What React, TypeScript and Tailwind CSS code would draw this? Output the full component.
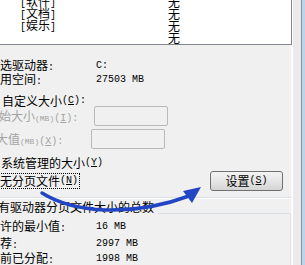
const cjk = "font-['Noto_Sans_CJK_SC','Noto_Sans_CJK_JP',sans-serif]";
const mono = "font-['Liberation_Mono',monospace]";

const drives = [
  ["软件", "无"],
  ["文档", "无"],
  ["娱乐", "无"],
  ["", "无"],
];

function Key({ k }: { k: string }) {
  return (
    <span className={`${mono} text-[10px]`}>
      (<span className="underline underline-offset-1">{k}</span>)
    </span>
  );
}

function Info({ label, value, className }: { label: string; value: string; className: string }) {
  return (
    <div className={`flex h-[12px] items-center leading-[12px] ${className}`}>
      <span className="w-[96px] shrink-0 whitespace-nowrap">
        {label}
        <span className={`${mono} text-[10px]`}>:</span>
      </span>
      <span className={`${mono} text-[10px]`}>{value}</span>
    </div>
  );
}

function SizeRow({ label, k, className, shift }: { label: string; k: string; className: string; shift: string }) {
  return (
    <div className={`flex h-[20px] items-center ${className}`}>
      <span className={`w-[95px] shrink-0 whitespace-nowrap text-[#a3a3a3] ${shift}`}>
        {label}
        <span className={`${mono} text-[8px]`}>(MB)</span>
        <Key k={k} />
        <span className={`${mono} text-[10px]`}>:</span>
      </span>
      <div className="h-[20px] w-[74px] rounded-[2px] border border-[#b9b9b9] bg-[#f0f0f0]" />
    </div>
  );
}

export default function App() {
  return (
    <div className={`relative flex h-[265px] w-[305px] overflow-hidden bg-[#f0f0f0] text-[12px] text-black ${cjk}`}>
      <div className="flex w-[291px] shrink-0 flex-col">
        {/* drive list */}
        <div className="h-[45px] shrink-0 overflow-hidden border-b border-[#828790] bg-white">
          <div className="-mt-[4px] flex flex-col">
            {drives.map(([name, size], i) => (
              <div key={i} className="flex h-[12px] items-center leading-[12px]">
                <span className="w-[168px] shrink-0 pl-[20px] whitespace-nowrap">
                  {name && (
                    <>
                      <span className={`${mono} text-[10px]`}>[</span>
                      {name}
                      <span className={`${mono} text-[10px]`}>]</span>
                    </>
                  )}
                </span>
                <span>{size}</span>
              </div>
            ))}
          </div>
        </div>

        <Info label="选驱动器" value="C:" className="mt-[15px]" />
        <Info label="用空间" value="27503 MB" className="mt-[2px]" />

        <div className="mt-[9px] flex h-[12px] items-center pl-[2px] leading-[12px] whitespace-nowrap">
          自定义大小
          <Key k="C" />
          <span className={`${mono} text-[10px]`}>:</span>
        </div>

        <SizeRow label="始大小" k="I" className="-mt-[1px]" shift="-ml-[1px]" />
        <SizeRow label="大值" k="X" className="mt-[3px]" shift="-ml-[4px]" />

        <div className="mt-[8px] flex h-[12px] items-center pl-[1px] leading-[12px] whitespace-nowrap">
          系统管理的大小
          <Key k="Y" />
        </div>

        <div className="mt-[2px] flex h-[20px] items-center">
          <span className="-ml-[1px] flex h-[16px] items-center border border-dotted border-black pr-[1px] leading-[12px] whitespace-nowrap">
            无分页文件
            <Key k="N" />
          </span>
          <button className="mr-[8px] ml-auto flex h-[20px] w-[73px] items-center justify-center rounded-[3px] border border-[#707070] bg-gradient-to-b from-[#f3f3f3] via-[#e6e6e6] to-[#d4d4d4] leading-[12px]">
            设置
            <Key k="S" />
          </button>
        </div>

        <div className="mt-[6px] h-px bg-[#d9dfe3]" />
        <div className="h-px bg-white" />

        <div className="mt-[2px] flex h-[13px] items-center leading-[12px]">
          <span className="-ml-[2px] whitespace-nowrap">有驱动器分页文件大小的总数</span>
          <div className="ml-[4px] mt-[13px] h-[7px] flex-1 self-start border-t border-r border-[#d9dfe3]" />
        </div>
        <div className="flex flex-1 flex-col border-r border-[#d9dfe3]">
          <Info label="许的最小值" value="16 MB" className="mt-[8px]" />
          <Info label="荐" value="2997 MB" className="mt-[5px]" />
          <Info label="前已分配" value="1998 MB" className="mt-[3px]" />
        </div>
      </div>

      {/* window frame edge */}
      <div className="flex w-px shrink-0 flex-col">
        <div className="h-[45px] bg-[#828790]" />
        <div className="flex-1 bg-[#fafafa]" />
      </div>
      <div className="w-px shrink-0 bg-white" />
      <div className="w-[8px] shrink-0 bg-[#eaeaea]" />
      <div className="w-px shrink-0 bg-[#8f9194]" />
      <div className="w-[3px] shrink-0 bg-[#bcd3ec]" />

      {/* annotation arrow */}
      <svg className="pointer-events-none absolute top-0 left-0" width="305" height="265" viewBox="0 0 305 265">
        <path
          d="M42 193 C 58 203, 80 209, 105 210 C 140 211, 165 205, 189 196"
          fill="none"
          stroke="#2145c4"
          strokeWidth="3.5"
          strokeLinecap="round"
        />
        <polygon points="183,191 201,187 192,203" fill="#2145c4" />
      </svg>
    </div>
  );
}
